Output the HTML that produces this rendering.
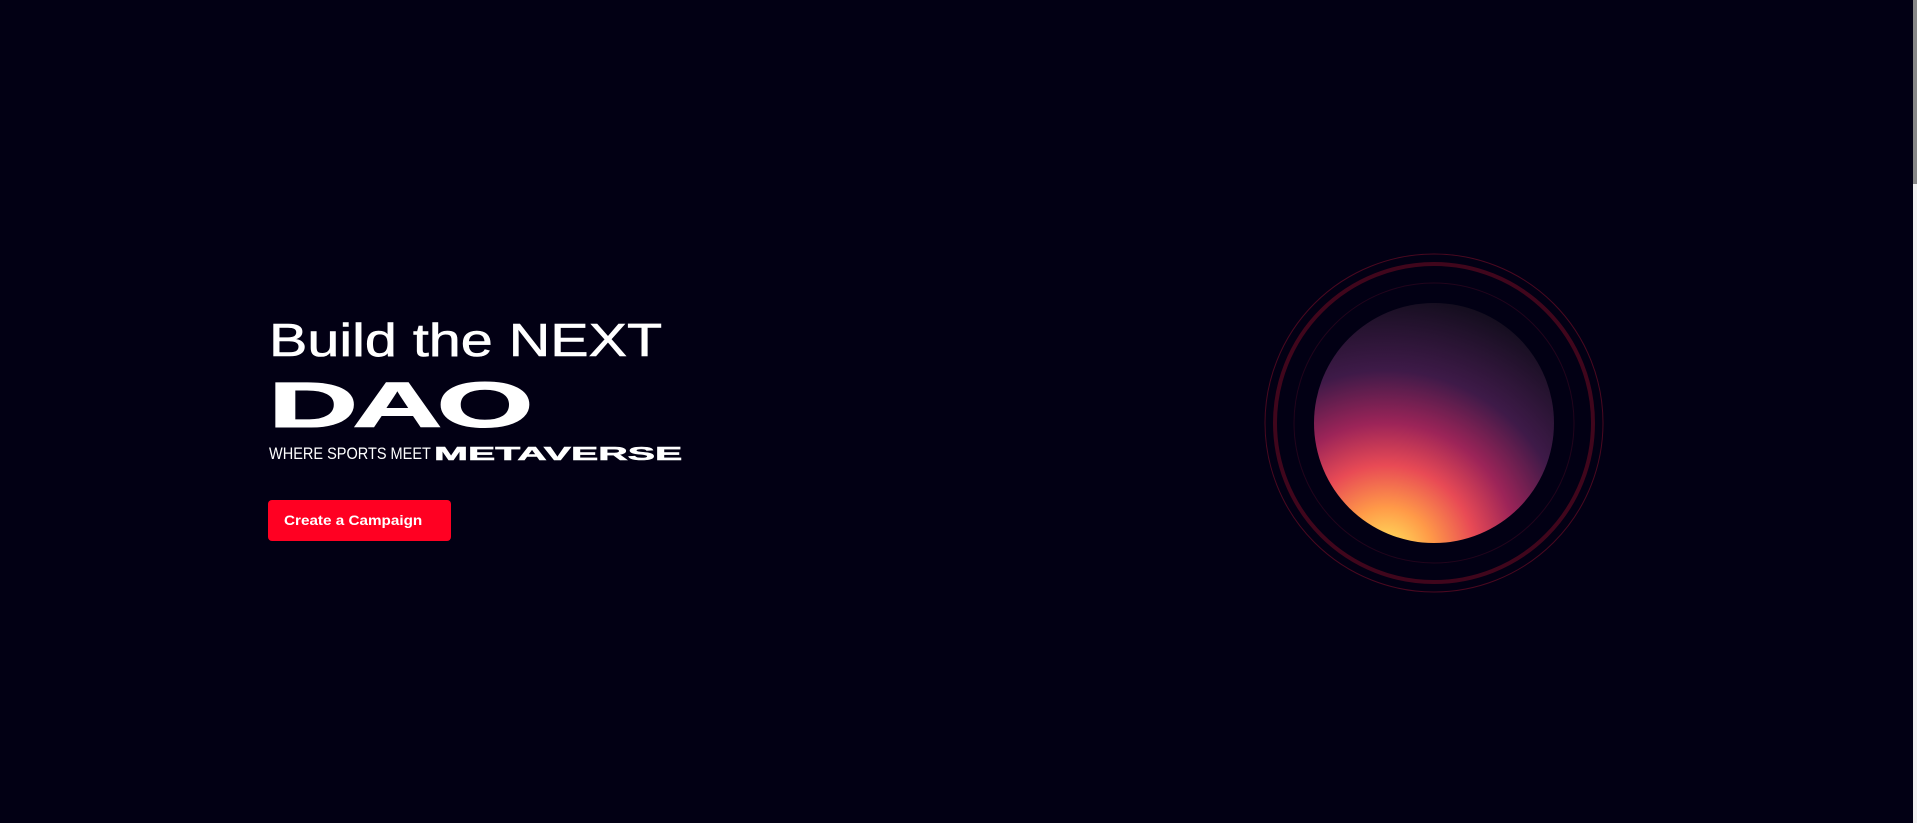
<!DOCTYPE html>
<html><head><style>
html,body{margin:0;padding:0;width:1917px;height:823px;overflow:hidden;background:#020014;font-family:"Liberation Sans",sans-serif;color:#fff;position:relative}
.t{position:absolute;white-space:nowrap;transform-origin:0 0;line-height:1}
.sb{position:absolute;left:1913px;top:0;width:4px;height:823px;background:#f0f0f0}
.sb div{width:4px;height:184px;background:#888}
.btn{position:absolute;left:268px;top:500px;width:183px;height:41px;background:#ff0022;border-radius:4px}
</style></head><body>
<div class="t" style="left:269px;top:317px;font-size:46px;transform:scaleX(1.25);-webkit-text-stroke:0.6px #fff">Build the NEXT</div>
<div class="t" style="left:268px;top:373px;font-size:64px;font-weight:900;letter-spacing:-3px;transform:scaleX(1.95);-webkit-text-stroke:1px #fff">DAO</div>
<div class="t" style="left:269px;top:446px;font-size:16.5px;transform:scaleX(0.88)">WHERE SPORTS MEET</div>
<div class="t" style="left:434px;top:445px;font-size:18px;font-weight:900;transform:scaleX(2.27);-webkit-text-stroke:0.5px #fff">METAVERSE</div>
<div class="btn"></div>
<div class="t" style="left:284px;top:513px;font-size:14px;font-weight:bold;transform:scaleX(1.09)">Create a Campaign</div>
<svg style="position:absolute;left:0;top:0" width="1917" height="823">
<defs>
<radialGradient id="g1" cx="0.3" cy="1.05" r="1.1">
<stop offset="0" stop-color="#fff060"/>
<stop offset="0.18" stop-color="#ff9a48"/>
<stop offset="0.34" stop-color="#e84a55"/>
<stop offset="0.5" stop-color="#9c2458"/>
<stop offset="0.7" stop-color="#3e1a48"/>
<stop offset="1" stop-color="#120d1c"/>
</radialGradient>
</defs>
<circle cx="1434" cy="423" r="169" fill="none" stroke="#4a0820" stroke-width="1"/>
<circle cx="1434" cy="423" r="159" fill="none" stroke="#40061c" stroke-width="4"/>
<circle cx="1434" cy="423" r="140" fill="none" stroke="#22041c" stroke-width="1"/>
<circle cx="1434" cy="423" r="120" fill="url(#g1)"/>
</svg>
<div class="sb"><div></div></div>
</body></html>
